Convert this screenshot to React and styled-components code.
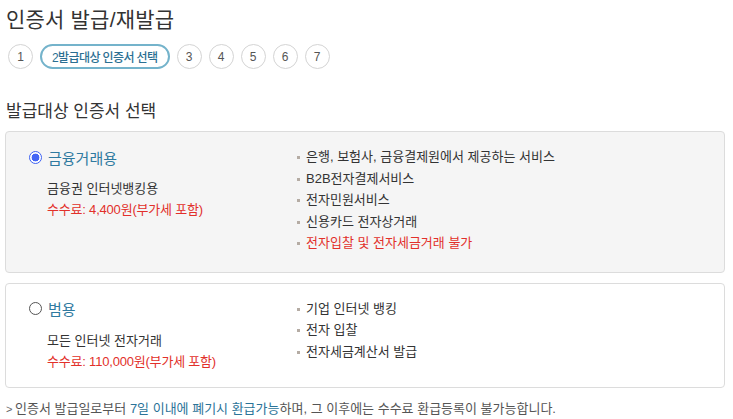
import React from 'react'
import styled, { createGlobalStyle } from 'styled-components'

const GlobalStyle = createGlobalStyle`
  body {
    margin: 0;
    background: #fff;
    font-family: "Liberation Sans", "Noto Sans CJK KR", sans-serif;
    color: #333;
  }
`

const steps = ['1', '2', '3', '4', '5', '6', '7']

const options = [
    {
        id: 'finance',
        label: '금융거래용',
        desc: '금융권 인터넷뱅킹용',
        fee: '수수료: 4,400원(부가세 포함)',
        checked: true,
        items: [
            { text: '은행, 보험사, 금융결제원에서 제공하는 서비스' },
            { text: 'B2B전자결제서비스' },
            { text: '전자민원서비스' },
            { text: '신용카드 전자상거래' },
            { text: '전자입찰 및 전자세금거래 불가', warn: true },
        ],
    },
    {
        id: 'general',
        label: '범용',
        desc: '모든 인터넷 전자거래',
        fee: '수수료: 110,000원(부가세 포함)',
        checked: false,
        items: [
            { text: '기업 인터넷 뱅킹' },
            { text: '전자 입찰' },
            { text: '전자세금계산서 발급' },
        ],
    },
]

const App = () => {
    return (
        <Page>
            <GlobalStyle />
            <Title>인증서 발급/재발급</Title>

            <StepList>
                {steps.map((s) =>
                    s === '2'
                        ? <ActiveStep key={s}>2발급대상 인증서 선택</ActiveStep>
                        : <Step key={s}>{s}</Step>
                )}
            </StepList>

            <SubTitle>발급대상 인증서 선택</SubTitle>

            {options.map((opt) => (
                <OptionBox key={opt.id} $selected={opt.checked}>
                    <LeftCol>
                        <RadioRow>
                            <Radio $checked={opt.checked} />
                            <OptionLabel>{opt.label}</OptionLabel>
                        </RadioRow>
                        <Desc>{opt.desc}</Desc>
                        <Fee>{opt.fee}</Fee>
                    </LeftCol>
                    <FeatureList>
                        {opt.items.map((item, i) => (
                            <Feature key={i} $warn={item.warn}>{item.text}</Feature>
                        ))}
                    </FeatureList>
                </OptionBox>
            ))}

            <Notice>
                <Arrow>&gt;</Arrow>
                인증서 발급일로부터 <Highlight>7일 이내에 폐기시 환급가능</Highlight>하며, 그 이후에는 수수료 환급등록이 불가능합니다.
            </Notice>
        </Page>
    )
}

const Page = styled.div`
    padding: 5px 8px 0 5px;
`

const Title = styled.h1`
    margin: 0 0 0 1px;
    font-size: 21px;
    font-weight: 400;
    line-height: 30px;
    color: #333;
    letter-spacing: 0.2px;
`

const StepList = styled.div`
    display: flex;
    gap: 7px;
    margin: 9px 0 0 3px;
`

const Step = styled.span`
    width: 23px;
    height: 23px;
    border: 1px solid #d4d4d4;
    border-radius: 50%;
    display: flex;
    align-items: center;
    justify-content: center;
    font-size: 12px;
    color: #555;
`

const ActiveStep = styled.span`
    height: 21px;
    padding: 0 10px;
    border: 2px solid #74b3cb;
    border-radius: 13px;
    display: flex;
    align-items: center;
    font-size: 12px;
    font-weight: 500;
    color: #2b6f92;
    letter-spacing: -0.6px;
`

const SubTitle = styled.h2`
    margin: 32px 0 0 1px;
    font-size: 17px;
    font-weight: 400;
    line-height: 22px;
    color: #333;
`

const OptionBox = styled.div`
    display: grid;
    grid-template-columns: 268px 1fr;
    margin-top: ${(p) => (p.$selected ? '8px' : '10px')};
    padding: 14px 10px ${(p) => (p.$selected ? '18px' : '15px')} 23px;
    border: 1px solid #dcdcdc;
    border-radius: 4px;
    background: ${(p) => (p.$selected ? '#f5f5f5' : '#fff')};
`

const LeftCol = styled.div`
    display: flex;
    flex-direction: column;
`

const RadioRow = styled.div`
    display: flex;
    align-items: center;
    gap: 6px;
    height: 22px;
`

const Radio = styled.span`
    box-sizing: border-box;
    width: 13px;
    height: 13px;
    border-radius: 50%;
    border: ${(p) => (p.$checked ? '1.5px solid #3f63f3' : '1px solid #555')};
    background: ${(p) => (p.$checked ? 'radial-gradient(circle, #4466f5 0 3.6px, #fff 4.2px)' : '#fff')};
`

const OptionLabel = styled.span`
    font-size: 15px;
    color: #2f7aa0;
`

const Desc = styled.div`
    margin: 11px 0 0 18px;
    font-size: 13px;
    line-height: 20px;
    color: #333;
`

const Fee = styled.div`
    margin: 1px 0 0 18px;
    font-size: 13px;
    line-height: 20px;
    color: #e2302a;
    letter-spacing: -0.2px;
`

const FeatureList = styled.ul`
    list-style: none;
    margin: 0;
    padding: 0;
`

const Feature = styled.li`
    position: relative;
    padding-left: 9px;
    font-size: 13px;
    line-height: 21.5px;
    color: ${(p) => (p.$warn ? '#e2302a' : '#333')};

    &::before {
        content: '';
        position: absolute;
        left: 0;
        top: 10px;
        width: 3px;
        height: 3px;
        background: #b5aca4;
    }
`

const Notice = styled.p`
    margin: 11px 0 0 1px;
    font-size: 13px;
    line-height: 20px;
    color: #555;
`

const Arrow = styled.span`
    display: inline-block;
    width: 9px;
    font-size: 11px;
    color: #666;
`

const Highlight = styled.span`
    color: #2b7398;
`

export default App
